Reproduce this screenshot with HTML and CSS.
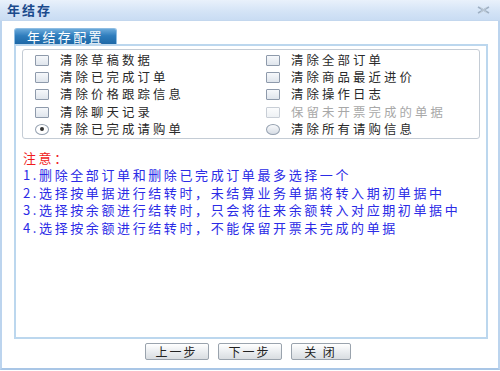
FILE: index.html
```html
<!DOCTYPE html>
<html lang="zh-CN">
<head>
<meta charset="utf-8">
<title>年结存</title>
<link rel="stylesheet" href="styles.css">
</head>
<body>
<div class="window">
  <div class="titlebar">
    <span class="title">年结存</span>
    <svg class="close" width="13" height="8" viewBox="0 0 13 8" aria-hidden="true">
      <path d="M1 1 L12 7 M12 1 L1 7" stroke="#9fb0c4" stroke-width="1.6" fill="none"/>
      <path d="M3 1 L10 7 M10 1 L3 7" stroke="#c3ced9" stroke-width="1" fill="none"/>
    </svg>
  </div>
  <div class="content">
    <div class="tab">年结存配置</div>
    <div class="panel">
      <div class="options">
        <label class="opt"><span class="box"></span><span class="lbl">清除草稿数据</span></label>
        <label class="opt"><span class="box"></span><span class="lbl">清除全部订单</span></label>
        <label class="opt"><span class="box"></span><span class="lbl">清除已完成订单</span></label>
        <label class="opt"><span class="box"></span><span class="lbl">清除商品最近进价</span></label>
        <label class="opt"><span class="box"></span><span class="lbl">清除价格跟踪信息</span></label>
        <label class="opt"><span class="box"></span><span class="lbl">清除操作日志</span></label>
        <label class="opt"><span class="box"></span><span class="lbl">清除聊天记录</span></label>
        <label class="opt disabled"><span class="box"></span><span class="lbl">保留未开票完成的单据</span></label>
        <label class="opt"><span class="radio checked"></span><span class="lbl">清除已完成请购单</span></label>
        <label class="opt"><span class="radio"></span><span class="lbl">清除所有请购信息</span></label>
      </div>
      <div class="notes">
        <p class="warn">注意：</p>
        <p>1.删除全部订单和删除已完成订单最多选择一个</p>
        <p>2.选择按单据进行结转时，未结算业务单据将转入期初单据中</p>
        <p>3.选择按余额进行结转时，只会将往来余额转入对应期初单据中</p>
        <p>4.选择按余额进行结转时，不能保留开票未完成的单据</p>
      </div>
    </div>
    <div class="buttons">
      <button class="btn w64">上一步</button>
      <button class="btn w64">下一步</button>
      <button class="btn w60">关 闭</button>
    </div>
  </div>
</div>
</body>
</html>
```

FILE: styles.css
```css
html, body {
  margin: 0;
  padding: 0;
  background: #ffffff;
}

body {
  font-family: "Noto Sans CJK SC", "Noto Sans", sans-serif;
  font-size: 13px;
  color: #222;
}

.window {
  width: 500px;
  height: 370px;
  box-sizing: border-box;
  border-left: 2px solid #bcd4ee;
  border-right: 2px solid #bcd4ee;
  border-bottom: 2px solid #a9c6e6;
  background: #ffffff;
  display: flex;
  flex-direction: column;
}

.titlebar {
  height: 20px;
  margin: 0 -2px;
  padding: 0 8px 0 7px;
  display: flex;
  align-items: center;
  justify-content: space-between;
  background: linear-gradient(#e9f1fb, #d3e3f6 60%, #c9dcf3);
  border-bottom: 1px solid #c3d7ee;
}

.title {
  font-weight: bold;
  font-size: 13px;
  letter-spacing: 2px;
  color: #1b4a8c;
  line-height: 20px;
}

.close {
  margin-right: 2px;
}

.content {
  flex: 1;
  padding: 7px 10px 0 12px;
  display: flex;
  flex-direction: column;
}

.tab {
  align-self: flex-start;
  width: 103px;
  height: 16px;
  box-sizing: border-box;
  border: 1px solid #8fbde2;
  border-bottom: none;
  border-radius: 3px 3px 0 0;
  background: linear-gradient(#6aa9da, #2f7dbd 45%, #1d68a6);
  color: #ffffff;
  font-size: 13px;
  letter-spacing: 2.4px;
  line-height: 15px;
  text-align: center;
}

.panel {
  height: 295px;
  box-sizing: border-box;
  border: 2px solid #bcd7ee;
  padding: 3px 6px 0 6px;
}

.options {
  display: grid;
  grid-template-columns: 231px 1fr;
  grid-auto-rows: 17.2px;
  border: 1px solid #c4ccd5;
  border-radius: 3px;
  padding: 2px 0 0 12px;
}

.opt {
  display: flex;
  align-items: center;
  gap: 11px;
  font-size: 12.4px;
  letter-spacing: 3.1px;
  color: #2a2a2a;
  white-space: nowrap;
}

.lbl {
  line-height: 17px;
}

.opt.disabled {
  color: #a8a8a8;
}

.box {
  width: 14px;
  height: 11px;
  box-sizing: border-box;
  border: 1px solid #8e9aab;
  border-radius: 1px;
  background: linear-gradient(#f6f8fb, #dfe5ec);
  flex: none;
}

.disabled .box {
  border-color: #c8ced6;
  background: linear-gradient(#fbfcfd, #eef1f4);
}

.radio {
  width: 14px;
  height: 11px;
  box-sizing: border-box;
  border: 1px solid #95a1b0;
  border-radius: 50%;
  background: linear-gradient(#f8f9fb, #d7dde5);
  flex: none;
  display: flex;
  align-items: center;
  justify-content: center;
}

.radio.checked {
  background: #ffffff;
}

.radio.checked::after {
  content: "";
  width: 4px;
  height: 4px;
  border-radius: 50%;
  background: #333;
}

.notes {
  margin-top: 10px;
  padding-left: 1px;
}

.notes p {
  margin: 0;
  height: 17.4px;
  line-height: 17.4px;
  font-size: 13px;
  letter-spacing: 2.6px;
  color: #2b2be6;
  white-space: nowrap;
}

.notes p.warn {
  color: #f01c1c;
}

.buttons {
  display: flex;
  justify-content: center;
  gap: 9px;
  margin-top: 4px;
  padding-right: 7px;
}

.btn {
  height: 17px;
  box-sizing: border-box;
  padding: 0;
  border: 1px solid #9aa3ad;
  border-radius: 2px;
  background: linear-gradient(#ffffff, #e9ecef 55%, #d9dde1);
  font-family: "Noto Sans CJK SC", "Noto Sans", sans-serif;
  font-size: 12px;
  letter-spacing: 2px;
  line-height: 15px;
  color: #222;
}

.w64 { width: 64px; }
.w60 { width: 60px; }
```
